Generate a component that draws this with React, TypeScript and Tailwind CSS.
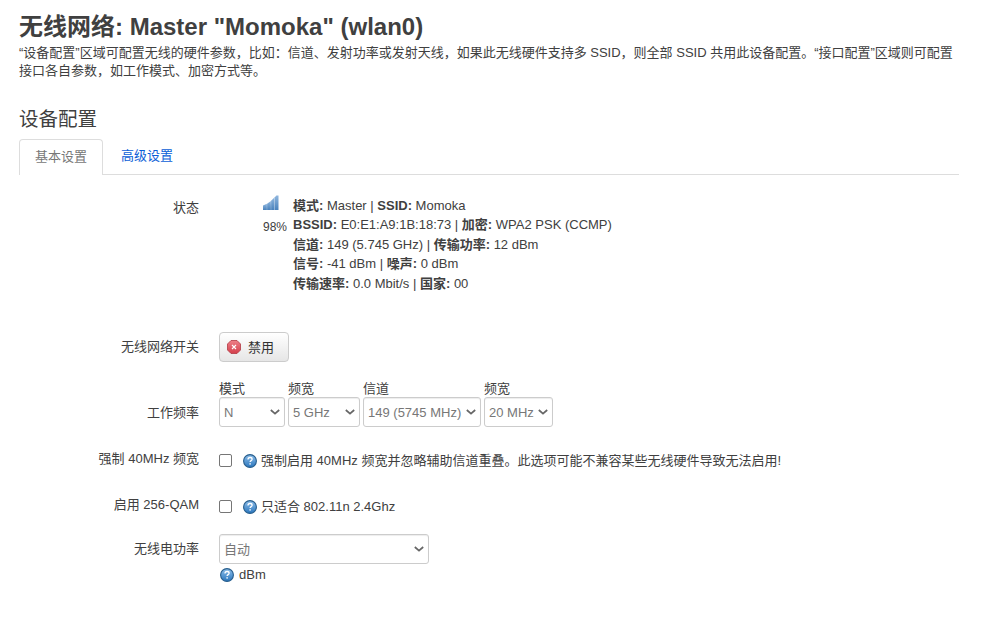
import React from 'react';

const ChevronSelect: React.FC<{ value: string; className: string }> = ({ value, className }) => (
  <div className={`flex items-center justify-between rounded-[3px] border border-[#ccc] bg-white pl-[4px] pr-[4px] text-[13px] text-[#777] shadow-[inset_0_1px_1px_rgba(0,0,0,0.075)] ${className}`}>
    <span className="whitespace-nowrap">{value}</span>
    <svg width="10" height="6" viewBox="0 0 10 6" className="shrink-0">
      <path d="M.8 1l4.2 3.6L9.2 1" fill="none" stroke="#666" strokeWidth="1.7" />
    </svg>
  </div>
);

const HelpIcon: React.FC = () => (
  <svg width="14" height="14" viewBox="0 0 14 14" className="shrink-0">
    <defs>
      <linearGradient id="help" x1="0" y1="0" x2="0" y2="1">
        <stop offset="0" stopColor="#8fbfea" />
        <stop offset="1" stopColor="#2a76bd" />
      </linearGradient>
    </defs>
    <circle cx="7" cy="7" r="6.4" fill="url(#help)" stroke="#265d8c" strokeWidth="1.1" />
    <path d="M5 5.4c0-1.3 1-1.9 2.1-1.9s2 .7 2 1.7c0 1.5-2 1.4-2 2.9" fill="none" stroke="#fff" strokeWidth="1.3" />
    <rect x="6.4" y="9.2" width="1.4" height="1.4" fill="#fff" />
  </svg>
);

const SignalIcon: React.FC = () => (
  <svg width="16" height="16" viewBox="0 0 16 16" className="block">
    <defs>
      <linearGradient id="sig" x1="0" y1="0" x2="0" y2="1">
        <stop offset="0" stopColor="#8fb6de" />
        <stop offset="1" stopColor="#4a82bc" />
      </linearGradient>
    </defs>
    <path d="M0 15V10.5L3.9 8.8V15Z" fill="url(#sig)" />
    <path d="M4.1 15V8.7L7.9 6V15Z" fill="url(#sig)" />
    <path d="M8.1 15V5.8L11.4 2.6V15Z" fill="url(#sig)" />
    <path d="M11.6 15V2.4L13.4 .6H15.5V15Z" fill="url(#sig)" />
  </svg>
);

const DisableIcon: React.FC = () => (
  <svg width="14" height="14" viewBox="0 0 14 14" className="shrink-0">
    <defs>
      <linearGradient id="dis" x1="0" y1="0" x2="0" y2="1">
        <stop offset="0" stopColor="#ee8088" />
        <stop offset="1" stopColor="#d43f4c" />
      </linearGradient>
    </defs>
    <path d="M4 .5h6L13.5 4v6L10 13.5H4L.5 10V4Z" fill="url(#dis)" stroke="#b13a44" strokeWidth="0.8" />
    <path d="M5 5l4 4M9 5l-4 4" stroke="#fff" strokeWidth="1.1" />
  </svg>
);

const Label: React.FC<{ children: React.ReactNode; className?: string }> = ({ children, className }) => (
  <div className={`w-[180px] shrink-0 text-right ${className ?? ''}`}>{children}</div>
);

const statusLines: [string, string][][] = [
  [['模式:', ' Master | '], ['SSID:', ' Momoka']],
  [['BSSID:', ' E0:E1:A9:1B:18:73 | '], ['加密:', ' WPA2 PSK (CCMP)']],
  [['信道:', ' 149 (5.745 GHz) | '], ['传输功率:', ' 12 dBm']],
  [['信号:', ' -41 dBm | '], ['噪声:', ' 0 dBm']],
  [['传输速率:', ' 0.0 Mbit/s | '], ['国家:', ' 00']],
];

const freqFields = [
  { label: '模式', value: 'N', width: 'w-[66px]' },
  { label: '频宽', value: '5 GHz', width: 'w-[72px]' },
  { label: '信道', value: '149 (5745 MHz)', width: 'w-[118px]' },
  { label: '频宽', value: '20 MHz', width: 'w-[69px]' },
];

export default function App() {
  return (
    <div className="h-[623px] overflow-hidden bg-white px-[19px] pt-[13px] pr-[47px] text-[13px] text-[#404040] [font-family:'Liberation_Sans','Noto_Sans_CJK_SC',sans-serif]">
      <h2 className="text-[24px] font-bold leading-[28px]">无线网络: Master "Momoka" (wlan0)</h2>
      <p className="mt-[3px] text-[13px] leading-[18px]">
        “设备配置”区域可配置无线的硬件参数，比如：信道、发射功率或发射天线，如果此无线硬件支持多 SSID，则全部 SSID 共用此设备配置。“接口配置”区域则可配置接口各自参数，如工作模式、加密方式等。
      </p>

      <h3 className="mt-[27px] text-[19.5px] font-normal leading-[24px]">设备配置</h3>

      <div className="mt-[8px] flex h-[36px] border-b border-[#ddd]">
        <div className="flex h-[36px] w-[84px] items-center justify-center rounded-t-[4px] border border-b-0 border-[#ddd] bg-white pb-[2px] text-[#777]">基本设置</div>
        <div className="flex h-[35px] w-[88px] items-center justify-center pb-[2px] text-[#0b5ed7]">高级设置</div>
      </div>

      <div className="mt-[14px] flex">
        <Label className="pt-[9px]">状态</Label>
        <div className="ml-[20px] flex">
          <div className="mt-[6px] ml-[44px] flex w-[24px] flex-col items-start">
            <SignalIcon />
            <span className="mt-[9px] text-[12px] leading-[14px]">98%</span>
          </div>
          <div className="ml-[6px] pt-[6.7px] pb-[0.3px] text-[13px] leading-[19.5px]">
            {statusLines.map((line, i) => (
              <div key={i} className="whitespace-pre">
                {line.map(([k, v]) => (
                  <React.Fragment key={k}>
                    <b>{k}</b>
                    {v}
                  </React.Fragment>
                ))}
              </div>
            ))}
          </div>
        </div>
      </div>

      <div className="mt-[39px] flex items-center">
        <Label className="pb-[2px]">无线网络开关</Label>
        <div className="ml-[20px] flex h-[30px] w-[70px] items-center gap-[7px] rounded-[4px] border border-[#ccc] bg-gradient-to-b from-white to-[#e6e6e6] pl-[7px] text-[#333]">
          <DisableIcon />
          <span>禁用</span>
        </div>
      </div>

      <div className="mt-[19px] flex items-end">
        <Label className="pb-[5px]">工作频率</Label>
        <div className="ml-[20px] flex gap-[3px]">
          {freqFields.map((f, i) => (
            <div key={i} className={f.width}>
              <div className="text-[13px] leading-[16px]">{f.label}</div>
              <ChevronSelect value={f.value} className="h-[30px]" />
            </div>
          ))}
        </div>
      </div>

      <div className="mt-[21px] flex items-start">
        <Label className="pt-[2px] leading-[18px]">强制 40MHz 频宽</Label>
        <div className="ml-[20px] flex items-center pt-[3px]">
          <span className="mt-[-2px] h-[13px] w-[13px] rounded-[2px] border border-[#767676] bg-white" />
          <span className="ml-[11px]"><HelpIcon /></span>
          <span className="ml-[4px] leading-[20px]">强制启用 40MHz 频宽并忽略辅助信道重叠。此选项可能不兼容某些无线硬件导致无法启用!</span>
        </div>
      </div>

      <div className="mt-[25px] flex items-start">
        <Label className="leading-[18px]">启用 256-QAM</Label>
        <div className="ml-[20px] flex items-center pt-[1px]">
          <span className="mt-[-2px] h-[13px] w-[13px] rounded-[2px] border border-[#767676] bg-white" />
          <span className="ml-[11px]"><HelpIcon /></span>
          <span className="ml-[4px] leading-[20px]">只适合 802.11n 2.4Ghz</span>
        </div>
      </div>

      <div className="mt-[17px] flex items-start">
        <Label className="pt-[6px] leading-[18px]">无线电功率</Label>
        <div className="ml-[20px]">
          <ChevronSelect value="自动" className="h-[30px] w-[210px]" />
          <div className="mt-[2px] flex items-center gap-[5px] pl-[1px] leading-[18px]">
            <HelpIcon />
            <span>dBm</span>
          </div>
        </div>
      </div>
    </div>
  );
}
